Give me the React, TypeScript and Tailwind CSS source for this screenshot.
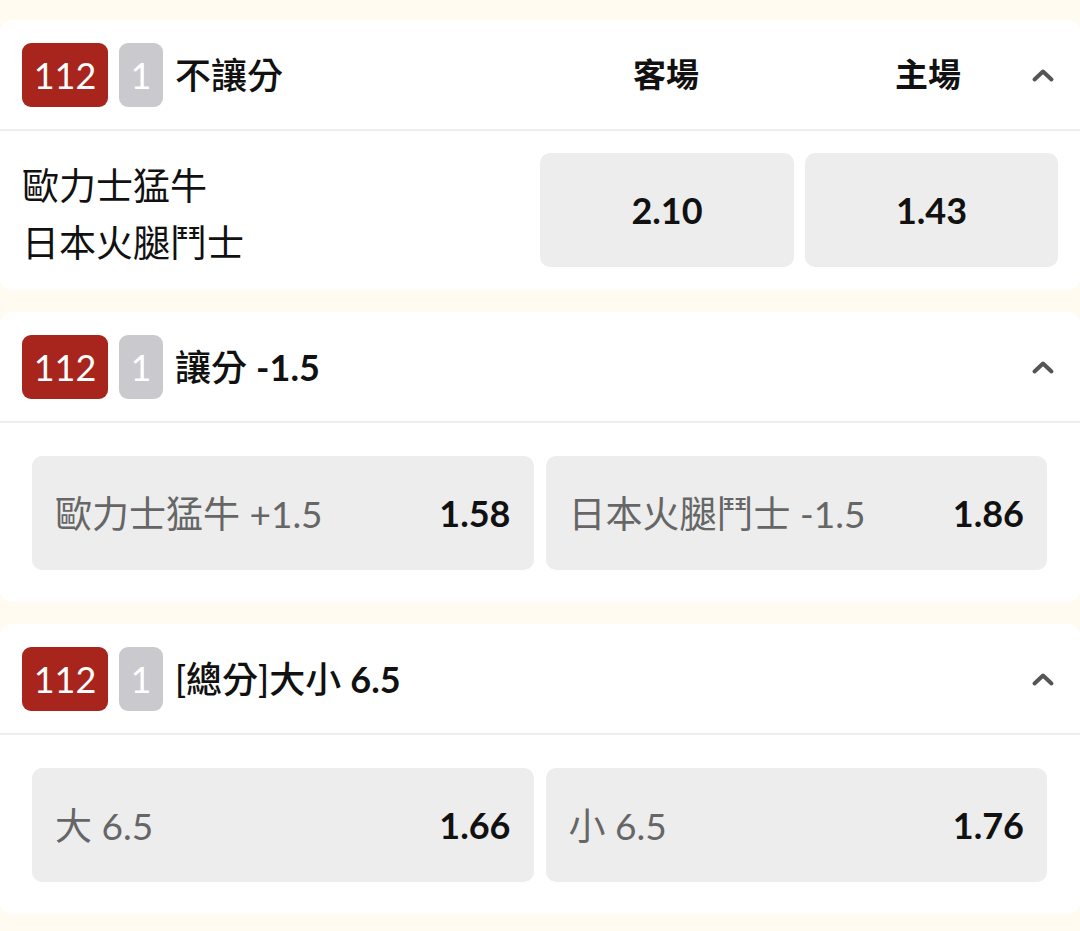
import React from "react";

const FONT = { fontFamily: '"Lato", "Noto Sans CJK TC", sans-serif' };

function Chevron({ className = "" }: { className?: string }) {
  return (
    <svg
      width="24"
      height="16"
      viewBox="0 0 24 16"
      className={className}
      fill="none"
    >
      <path
        d="M3.5 12.5 L12 4.5 L20.5 12.5"
        stroke="#555555"
        strokeWidth="4"
        strokeLinecap="round"
        strokeLinejoin="round"
      />
    </svg>
  );
}

function Badges() {
  return (
    <div className="flex items-center gap-[11px] shrink-0">
      <div className="flex h-[64px] w-[86px] items-center justify-center rounded-[9px] bg-[#a8251d] text-[36px] font-normal leading-none text-white">
        112
      </div>
      <div className="flex h-[64px] w-[44px] items-center justify-center rounded-[9px] bg-[#c9c9ce] text-[36px] font-normal leading-none text-white">
        1
      </div>
    </div>
  );
}

function OddsButton({ label, odds }: { label: string; odds: string }) {
  return (
    <div className="flex h-[114px] items-center justify-between rounded-[10px] bg-[#ededed] px-[23px]">
      <span className="text-[37px] leading-none text-[#666666]">{label}</span>
      <span className="text-[36px] font-bold leading-none text-[#111111]">
        {odds}
      </span>
    </div>
  );
}

function PairCard({
  cjk,
  num,
  left,
  right,
}: {
  cjk: string;
  num: string;
  left: [string, string];
  right: [string, string];
}) {
  return (
    <div className="rounded-[12px] bg-white">
      <div className="flex h-[111px] items-center border-b-2 border-[#eeeeee] pl-[22px] pr-[25px]">
        <Badges />
        <div className="ml-[12px] flex-1 text-[36px] leading-none text-[#111111]">
          <span className="font-medium">{cjk}</span>
          <span className="font-bold">{num}</span>
        </div>
        <Chevron />
      </div>
      <div className="grid grid-cols-2 gap-[12px] pb-[32px] pl-[32px] pr-[33px] pt-[33px]">
        <OddsButton label={left[0]} odds={left[1]} />
        <OddsButton label={right[0]} odds={right[1]} />
      </div>
    </div>
  );
}

export default function App() {
  return (
    <div
      className="min-h-[931px] w-[1080px] bg-[#fffbf0] pt-[20px]"
      style={FONT}
    >
      <div className="flex flex-col gap-[22px]">
        {/* Card 1 */}
        <div className="rounded-[12px] bg-white">
          <div className="flex h-[111px] items-center border-b-2 border-[#eeeeee] pl-[22px] pr-[25px]">
            <Badges />
            <div className="ml-[12px] flex-1 text-[36px] font-medium leading-none text-[#111111]">
              不讓分
            </div>
            <div className="flex gap-[11px]">
              <div className="w-[254px] text-center text-[33px] font-bold leading-none text-[#111111]">
                客場
              </div>
              <div className="w-[254px] pr-[6px] text-center text-[33px] font-bold leading-none text-[#111111]">
                主場
              </div>
            </div>
            <Chevron className="-ml-[27px]" />
          </div>
          <div className="flex items-center pb-[23px] pl-[22px] pr-[22px] pt-[22px]">
            <div className="-mb-[4px] flex-1 pt-[4px] text-[37px] leading-[57px] text-[#111111]">
              <div>歐力士猛牛</div>
              <div>日本火腿鬥士</div>
            </div>
            <div className="flex gap-[11px]">
              <div className="flex h-[114px] w-[254px] items-center justify-center rounded-[10px] bg-[#ededed] text-[36px] font-bold leading-none text-[#111111]">
                2.10
              </div>
              <div className="flex h-[114px] w-[253px] items-center justify-center rounded-[10px] bg-[#ededed] text-[36px] font-bold leading-none text-[#111111]">
                1.43
              </div>
            </div>
          </div>
        </div>

        <PairCard
          cjk="讓分 "
          num="-1.5"
          left={["歐力士猛牛 +1.5", "1.58"]}
          right={["日本火腿鬥士 -1.5", "1.86"]}
        />

        <PairCard
          cjk="[總分]大小 "
          num="6.5"
          left={["大 6.5", "1.66"]}
          right={["小 6.5", "1.76"]}
        />
      </div>
    </div>
  );
}
